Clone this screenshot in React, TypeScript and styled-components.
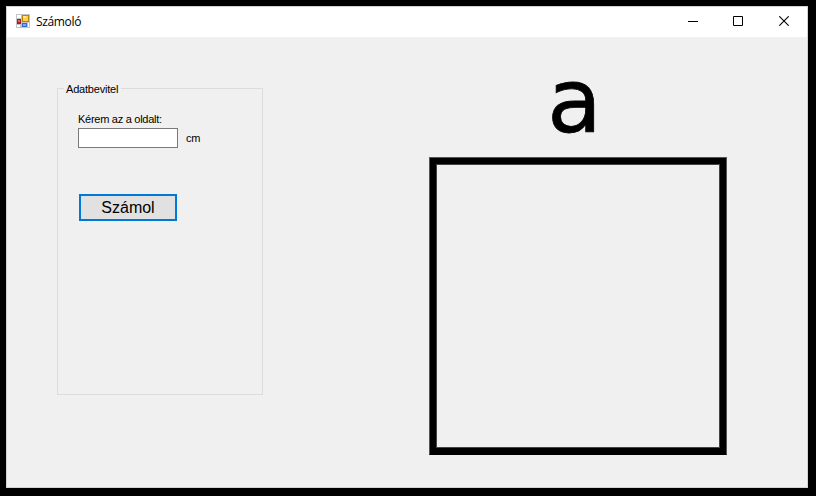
import React from "react";
import styled, { createGlobalStyle } from "styled-components";

const GlobalStyle = createGlobalStyle`
  * { box-sizing: border-box; }
  html, body { margin: 0; background: #000; }
`;

const Desktop = styled.div`
  width: 816px;
  height: 496px;
  padding: 6px 8px 8px 6px;
  background: #000;
  overflow: hidden;
  font-family: "Liberation Sans", Arial, sans-serif;
  color: #000;
`;

const Window = styled.main`
  display: flex;
  flex-direction: column;
  width: 802px;
  height: 482px;
  border: 1px solid #d2d4d4;
  background: #f0f0f0;
`;

const TitleBar = styled.header`
  display: flex;
  align-items: flex-start;
  flex: 0 0 30px;
  padding-left: 9px;
  background: #fff;
`;

const AppIcon = styled.svg`
  display: block;
  width: 14px;
  height: 14px;
  margin-top: 7px;
`;

const Title = styled.h1`
  margin: 7px auto 0 6px;
  font: 400 12px/16px "Open Sans", "Noto Sans", sans-serif;
  letter-spacing: -0.35px;
`;

const WindowButton = styled.button<{ $width: number }>`
  display: flex;
  align-items: center;
  justify-content: center;
  width: ${(p) => p.$width}px;
  height: 28px;
  padding: 0;
  border: 0;
  background: transparent;
`;

const Glyph = styled.svg`
  display: block;
  width: 10px;
  height: 10px;
`;

const Client = styled.section`
  display: flex;
  flex: 1;
  align-items: flex-start;
  padding: 44px 0 0 50px;
`;

const GroupBox = styled.fieldset`
  width: 206px;
  height: 314px;
  margin: 0;
  padding: 16px 0 0 20px;
  border: 1px solid #dcdcdc;
  min-width: 0;
`;

const Legend = styled.legend`
  margin-left: -14px;
  padding: 1px 3px 0 2px;
  font-size: 11px;
  line-height: 14px;
  letter-spacing: -0.2px;
`;

const Label = styled.label`
  display: block;
  font-size: 11px;
  line-height: 14px;
  letter-spacing: -0.27px;
  white-space: nowrap;
`;

const InputRow = styled.div`
  display: flex;
  align-items: center;
  margin-top: 2px;
`;

const TextBox = styled.input`
  width: 100px;
  height: 20px;
  margin: 0 8px 0 0;
  padding: 1px 3px;
  border: 1px solid #7a7a7a;
  border-radius: 0;
  outline: 0;
  background: #fff;
`;

const PushButton = styled.button`
  display: block;
  width: 98px;
  height: 27px;
  margin: 46px 0 0 1px;
  padding: 0;
  border: 2px solid #0078d7;
  border-radius: 0;
  background: #e1e1e1;
  color: #000;
  font: 400 16px/22px "Liberation Sans", Arial, sans-serif;
`;

const Figure = styled.figure`
  display: flex;
  flex-direction: column;
  align-items: center;
  width: 298px;
  margin: -26px 0 0 166px;
`;

const SideName = styled.figcaption`
  height: 102px;
  padding-right: 7px;
  font: 400 89px/92px "DejaVu Sans", Verdana, sans-serif;
  -webkit-text-stroke: 0.8px #000;
`;

const Square = styled.div`
  width: 298px;
  height: 298px;
  border: 1px solid #555;
  border-bottom-color: #000;
`;

const SquareSide = styled.div`
  width: 100%;
  height: 100%;
  border: 6px solid #000;
  box-shadow: inset 0 0 0 1px #444;
`;

export default function App() {
  return (
    <>
      <GlobalStyle />
      <Desktop>
        <Window>
          <TitleBar>
            <AppIcon viewBox="0 0 14 14" shapeRendering="crispEdges">
              <rect width="14" height="14" fill="#c4c4c4" />
              <path d="M1 1h4v3H1zM1 11h3v2H1zM12 9h1v4h-1z" fill="#fff" />
              <rect x="1" y="5" width="4" height="5" fill="#a52422" />
              <rect x="2" y="6" width="2" height="2" fill="#df6863" />
              <rect x="6" y="1" width="7" height="7" fill="#b58512" />
              <rect x="7" y="2" width="5" height="5" fill="#ffd044" />
              <rect x="7" y="2" width="3" height="2" fill="#ffe89d" />
              <rect x="6" y="9" width="5" height="4" fill="#376ac9" />
              <rect x="7" y="10" width="3" height="2" fill="#77a9f4" />
            </AppIcon>
            <Title>Számoló</Title>
            <WindowButton $width={44} aria-label="Kis méret">
              <Glyph viewBox="0 0 10 10">
                <path d="M0 5.5h10" stroke="#000" />
              </Glyph>
            </WindowButton>
            <WindowButton $width={46} aria-label="Teljes méret">
              <Glyph viewBox="0 0 10 10">
                <path d="M.5 .5h9v9h-9z" fill="none" stroke="#000" />
              </Glyph>
            </WindowButton>
            <WindowButton $width={46} aria-label="Bezárás">
              <Glyph viewBox="0 0 10 10">
                <path d="M.3 .3l9.4 9.4M9.7 .3L.3 9.7" stroke="#000" strokeWidth="1.1" />
              </Glyph>
            </WindowButton>
          </TitleBar>
          <Client>
            <GroupBox>
              <Legend>Adatbevitel</Legend>
              <Label htmlFor="side">Kérem az a oldalt:</Label>
              <InputRow>
                <TextBox id="side" />
                <Label as="span">cm</Label>
              </InputRow>
              <PushButton>Számol</PushButton>
            </GroupBox>
            <Figure>
              <SideName>a</SideName>
              <Square>
                <SquareSide />
              </Square>
            </Figure>
          </Client>
        </Window>
      </Desktop>
    </>
  );
}
